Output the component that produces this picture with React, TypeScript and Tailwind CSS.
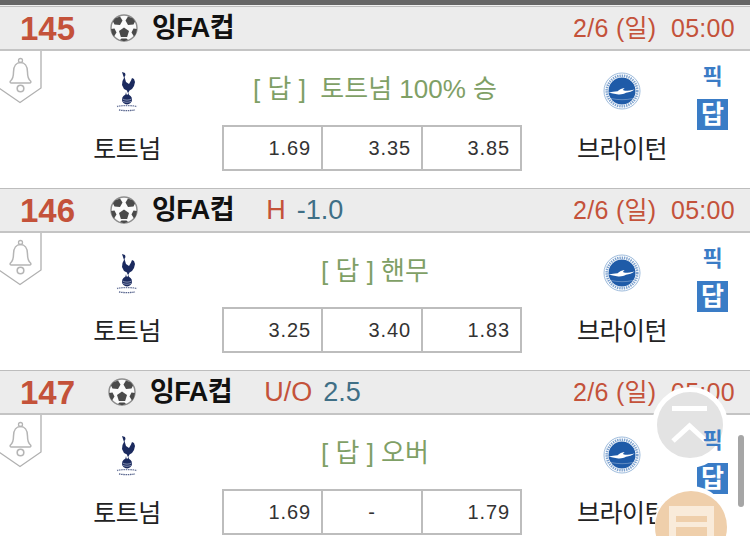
const FONT = '"Liberation Sans", "Noto Sans CJK KR", sans-serif';

function Ball() {
  return (
    <svg width="28" height="28" viewBox="0 0 28 28" className="shrink-0">
      <circle cx="14" cy="14" r="13" fill="#fafafa" stroke="#8e8e8e" strokeWidth="1.4" />
      <path d="M14 13.500l5 3.500-1.900 6h-6.200l-1.900-6z" fill="#4a4a4a" />
      <path d="M5 4.500l5-2 2.500 4-2.500 4.500-5.500-.5-1.500-3z" fill="#4a4a4a" />
      <path d="M23 4.500l-5-2-2.500 4 2.500 4.500 5.500-.5 1.500-3z" fill="#4a4a4a" />
      <path d="M1 15l3.500-.5 2 4-2.500 4-1.800-2.500z" fill="#4a4a4a" />
      <path d="M27 15l-3.500-.5-2 4 2.500 4 1.800-2.500z" fill="#4a4a4a" />
      <path d="M10 26l1.500-1.500h5L18 26l-4 1.200z" fill="#4a4a4a" />
    </svg>
  );
}

function Bell() {
  return (
    <svg width="42" height="53" viewBox="0 0 42 53" className="block">
      <path d="M41 0v37L20 51.500-1 37V0" fill="#fff" stroke="#b0b0b0" strokeWidth="1.300" />
      <path d="M10.500 30c2.500-2 3-4 3-9 0-6 3-9.500 7-9.500s7 3.500 7 9.500c0 5 .5 7 3 9 .8 1 .3 2-1 2H11.500c-1.300 0-1.800-1-1-2z" fill="none" stroke="#b5b5b5" strokeWidth="1.500" />
      <circle cx="20.500" cy="9.500" r="2" fill="none" stroke="#b5b5b5" strokeWidth="1.300" />
      <circle cx="20.500" cy="37.500" r="3.300" fill="none" stroke="#b5b5b5" strokeWidth="1.600" />
    </svg>
  );
}

function Spurs() {
  return (
    <svg width="24" height="42" viewBox="0 0 24 42" className="block">
      <path d="M7 1l3 1 .5 2-1 2 1.500 5 3 2 2-3.500 1-2.500 2 1 1 3-1 4-2 3-2.500 1.500-1 2h-1l-.5-2-3-1.500-2-4 .5-4 1.500-3z" fill="#1b2a5e" />
      <path d="M11 21l.6 3h-1.200zM13.500 21l.4 3h-1z" fill="#1b2a5e" />
      <circle cx="12" cy="28.500" r="5" fill="#1b2a5e" />
      <path d="M7.500 28c3 1.500 6 1.500 9 0M8 30.500c3 1 5 1 8 0" stroke="#cfd6ea" strokeWidth=".6" fill="none" />
      <path d="M2 35.500c6-1.300 14-1.300 20 0" stroke="#6e7a9e" strokeWidth="1.300" strokeDasharray="1.500 .7" fill="none" />
      <path d="M4 39c5 .8 11 .8 16 0" stroke="#58658e" strokeWidth="1.300" strokeDasharray="1.500 .7" fill="none" />
    </svg>
  );
}

function Brighton() {
  return (
    <svg width="38" height="38" viewBox="0 0 38 38" className="block">
      <circle cx="19" cy="19" r="18" fill="#fff" stroke="#9dbbdc" strokeWidth="1" />
      <circle cx="19" cy="19" r="15.300" fill="none" stroke="#7fa3cf" strokeWidth="2.600" strokeDasharray="1.400 .9" />
      <circle cx="19" cy="19" r="13.500" fill="#1f5ba8" />
      <path d="M5.600 20.500c3-.8 6-1 9-1.200 1.500-1.300 3.500-2.800 7-3.300l-1.800 2 2.200.8c3.300 0 6.300-.6 9.500-1.300-2.500 1.800-5.300 2.800-8.500 3.300-2.500 1.600-6 2-9 1.500-2.800-.3-5.500-1-8.400-1.800z" fill="#fff" />
      <path d="M8 26.500c7 1.600 15 1.600 22 0" stroke="#fff" strokeWidth=".5" fill="none" opacity=".6" />
    </svg>
  );
}

type Match = {
  no: number;
  offset: string;
  extra?: { label: string; value: string };
  answer: string;
  odds: [string, string, string];
};

const matches: Match[] = [
  { no: 145, offset: "pl-[110px]", answer: "[ 답 ]  토트넘 100% 승", odds: ["1.69", "3.35", "3.85"] },
  { no: 146, offset: "pl-[110px]", extra: { label: "H", value: "-1.0" }, answer: "[ 답 ] 핸무", odds: ["3.25", "3.40", "1.83"] },
  { no: 147, offset: "pl-[108px]", extra: { label: "U/O", value: "2.5" }, answer: "[ 답 ] 오버", odds: ["1.69", "-", "1.79"] },
];

function Row({ m }: { m: Match }) {
  return (
    <section className="border-b border-[#bdbdbd] h-[182px] flex flex-col">
      <header className="relative h-[44px] shrink-0 bg-[#ececec] border-b-2 border-[#c4c4c4] flex items-center pr-[15px]">
        <span className="w-[76px] shrink-0 pl-[20px] text-[33px] leading-none font-bold text-[#c4523a]">{m.no}</span>
        <div className={`absolute left-0 flex items-center gap-[14px] ${m.offset}`}>
          <Ball />
          <span className="text-[27px] leading-none font-bold text-[#111] tracking-[-0.5px]">잉FA컵</span>
          {m.extra && (
            <span className="ml-[18px] text-[27px] leading-none whitespace-nowrap">
              <span className="text-[#c4523a]">{m.extra.label}</span>
              <span className="ml-[11px] text-[#3f6f86]">{m.extra.value}</span>
            </span>
          )}
        </div>
        <span className="ml-auto text-[25px] leading-none text-[#c4523a] whitespace-pre tracking-[0.3px]">2/6 (일)  05:00</span>
      </header>
      <div className="relative flex-1 flex">
        <div className="absolute left-0 top-0"><Bell /></div>
        <div className="w-[254px] shrink-0 flex flex-col items-center">
          <div className="h-[78px] pt-[20px] shrink-0"><Spurs /></div>
          <span className="mt-[4px] text-[25px] leading-[32px] text-[#222] tracking-[-0.5px]">토트넘</span>
        </div>
        <div className="shrink-0 w-[300px] -ml-[32px] flex flex-col items-center">
          <div className="h-[74px] pt-[22px] pl-[6px] shrink-0 text-[26px] leading-[32px] text-[#7fa066] whitespace-pre">{m.answer}</div>
          <div className="w-full h-[46px] grid grid-cols-[99px_100px_1fr] border-2 border-[#bdbdbd]">
            {m.odds.map((o, i) => (
              <div
                key={i}
                className={`flex items-center ${o === "-" ? "justify-center" : "justify-end pr-[10px]"} text-[20px] text-[#333] tracking-[0.9px] ${i < 2 ? "border-r-2 border-[#bdbdbd]" : ""}`}
              >
                {o}
              </div>
            ))}
          </div>
        </div>
        <div className="w-[150px] ml-[25px] shrink-0 flex flex-col items-center">
          <div className="h-[78px] pt-[21px] shrink-0"><Brighton /></div>
          <span className="mt-[4px] text-[25px] leading-[32px] text-[#222] tracking-[-0.5px]">브라이턴</span>
        </div>
        <div className="w-[31px] shrink-0 flex flex-col items-center pt-[12px]">
          <span className="relative z-20 text-[22px] leading-[28px] font-bold text-[#3a7cc6]">픽</span>
          <span className="mt-[8px] w-[31px] h-[31px] flex items-center justify-center bg-[#3a7cc6] text-white text-[25px] font-bold leading-none">답</span>
        </div>
      </div>
    </section>
  );
}

export default function App() {
  return (
    <div className="relative w-[750px] h-[536px] overflow-hidden bg-white" style={{ fontFamily: FONT }}>
      <div className="h-[5px] bg-[#666666]" />
      <div className="h-[1px] bg-[#f0f0f0]" />
      <div className="border-t border-[#bdbdbd]">
        {matches.map((m) => (
          <Row key={m.no} m={m} />
        ))}
      </div>
      <div className="absolute z-10 left-[652px] top-[387px] w-[76px] h-[76px] rounded-full bg-[#e3e3e3] border-[5px] border-white shadow-[0_5px_0_0_#fff] flex items-center justify-center">
        <svg width="38" height="38" viewBox="0 0 38 38">
          <path d="M1 2.500h35M2 35l16.500-15L35 35" fill="none" stroke="#fff" strokeWidth="5" />
        </svg>
      </div>
      <div className="absolute left-[738px] top-[435px] w-[6px] h-[72px] rounded-full bg-[#a6a6a6]" />
      <div className="absolute z-10 left-[655px] top-[491px] w-[72px] h-[72px] rounded-full bg-[#efcfab] shadow-[0_-5px_0_0_#fff] flex justify-center">
        <svg width="45" height="40" viewBox="0 0 45 40" className="mt-[15px]">
          <path d="M3.500 40V3.500h38V40" fill="none" stroke="#f9ebda" strokeWidth="7" />
          <path d="M0 0h45v10H0z" fill="#f9ebda" />
          <path d="M7 18.500h31" stroke="#f9ebda" strokeWidth="5" />
        </svg>
      </div>
    </div>
  );
}
